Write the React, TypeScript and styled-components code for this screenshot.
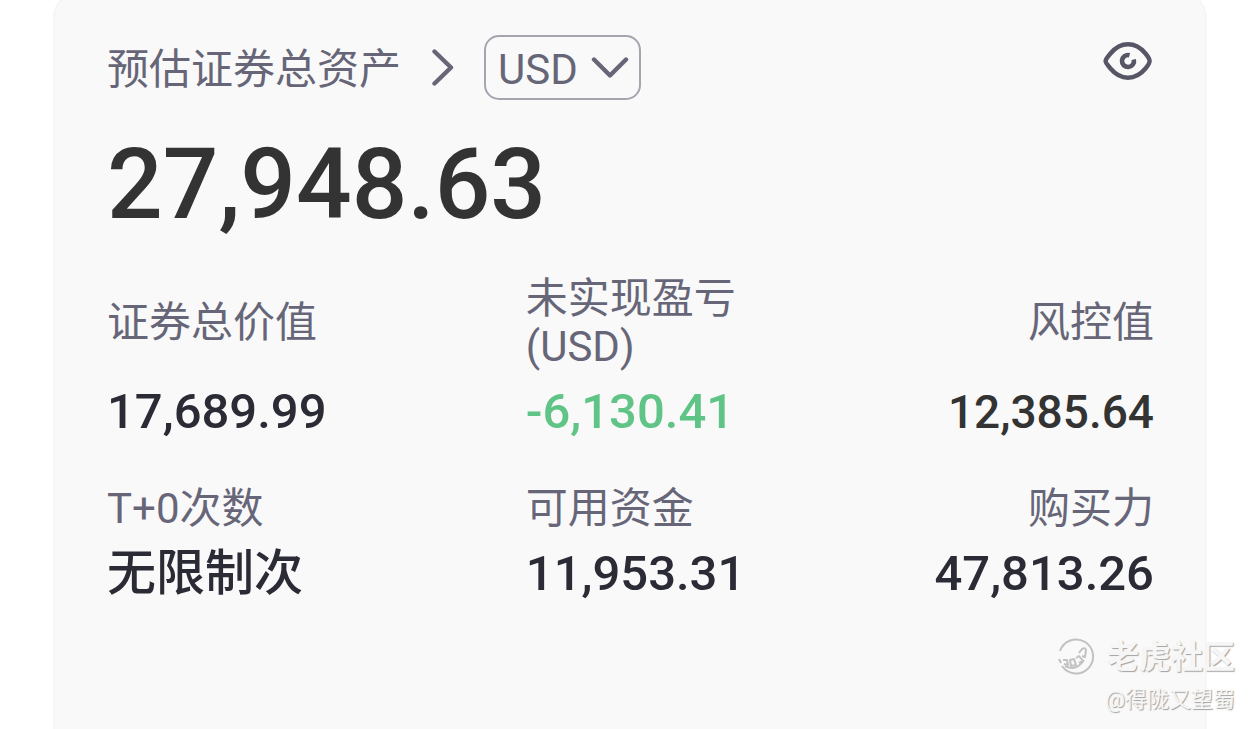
import React from "react";
import styled, { createGlobalStyle } from "styled-components";

const GlobalStyle = createGlobalStyle`
  * { box-sizing: border-box; }
  body {
    margin: 0;
    background: #fff;
    font-family: Roboto, "Noto Sans CJK SC", sans-serif;
  }
`;

const Page = styled.main`
  position: relative;
  min-height: 100vh;
  padding: 0 53px;
  overflow: hidden;
`;

const Card = styled.section`
  min-height: calc(100vh + 10px);
  margin-top: -10px;
  padding: 43px 51px 0 52px;
  border: 2px solid #f6f6f6;
  border-bottom: 0;
  border-radius: 28px 28px 0 0;
  background: #f9f9f9;
`;

const Header = styled.header`
  display: flex;
  align-items: center;
  height: 65px;
`;

const TitleLink = styled.a`
  display: flex;
  align-items: center;
  gap: 31px;
  color: #666678;
  font-size: 42px;
  line-height: 48px;
  text-decoration: none;
`;

const TitleText = styled.span`
  padding-top: 4px;
`;

const CurrencyBox = styled.label`
  position: relative;
  margin-left: 30px;
`;

const CurrencySelect = styled.select`
  display: block;
  width: 157px;
  height: 65px;
  padding: 4px 0 0 12px;
  border: 2px solid #a5a5af;
  border-radius: 15px;
  appearance: none;
  background: transparent;
  color: #666678;
  font: inherit;
  font-size: 42px;
`;

const SelectArrow = styled.svg`
  position: absolute;
  top: 20px;
  right: 12px;
  pointer-events: none;
`;

const EyeButton = styled.button`
  display: flex;
  align-self: flex-start;
  margin-left: auto;
  padding: 6px 1px 0 0;
  border: 0;
  background: none;
  cursor: pointer;
`;

const Total = styled.p`
  margin: 27px 0 32px;
  color: #333;
  font-size: 98px;
  font-weight: 500;
  line-height: 116px;
`;

const Metrics = styled.dl`
  display: grid;
  grid-template-columns: 40% 28% 32%;
  row-gap: 45px;
  margin: 0;
`;

const Metric = styled.div<{ $end?: boolean }>`
  display: flex;
  flex-direction: column;
  text-align: ${(p) => (p.$end ? "right" : "left")};
`;

const MetricLabel = styled.dt`
  display: flex;
  flex: 1;
  flex-direction: column;
  justify-content: center;
  color: #666678;
  font-size: 42px;
  line-height: 48px;
`;

const MetricValue = styled.dd<{ $tone?: string; $small?: boolean }>`
  margin: 13px 0 0;
  color: ${(p) => p.$tone || "#2b2b36"};
  font-size: ${(p) => (p.$small ? 46 : 49)}px;
  font-weight: 500;
  line-height: 56px;
`;

const Watermark = styled.aside`
  position: absolute;
  right: 25px;
  bottom: 12px;
  display: flex;
  flex-direction: column;
  align-items: flex-end;
  color: #f6f6f6;
  text-shadow: 1px 1px 1px #a0a0a0;
`;

const Brand = styled.div`
  display: flex;
  align-items: center;
  gap: 12px;
  font-size: 32px;
  font-weight: 700;
  line-height: 52px;
`;

const Author = styled.div`
  font-size: 22px;
  line-height: 34px;
`;

type Item = { label: string; value: string; end?: boolean; tone?: string; small?: boolean };

const items: Item[] = [
  { label: "证券总价值", value: "17,689.99" },
  { label: "未实现盈亏(USD)", value: "-6,130.41", tone: "#61c487" },
  { label: "风控值", value: "12,385.64", end: true, tone: "#333", small: true },
  { label: "T+0次数", value: "无限制次" },
  { label: "可用资金", value: "11,953.31" },
  { label: "购买力", value: "47,813.26", end: true },
];

export default function App() {
  return (
    <>
      <GlobalStyle />
      <Page>
        <Card>
          <Header>
            <TitleLink href="#assets">
              <TitleText>预估证券总资产</TitleText>
              <svg width="22" height="38" viewBox="0 0 22 38" fill="none" stroke="#666678" strokeWidth="4.4" strokeLinecap="round" strokeLinejoin="round">
                <path d="M2.500 2.500 L19 18.500 L2.500 34.500" />
              </svg>
            </TitleLink>
            <CurrencyBox>
              <CurrencySelect aria-label="币种" defaultValue="USD">
                <option>USD</option>
                <option>HKD</option>
              </CurrencySelect>
              <SelectArrow width="38" height="26" viewBox="0 0 38 26" fill="none" stroke="#666678" strokeWidth="4.4" strokeLinecap="round" strokeLinejoin="round">
                <path d="M3 4.500 L19 20.500 L35 4.500" />
              </SelectArrow>
            </CurrencyBox>
            <EyeButton aria-label="隐藏金额">
              <svg width="50" height="40" viewBox="0 0 50 40" fill="none" stroke="#565666">
                <path d="M2.6 20 C2.6 18 5 15.5 7.5 12.5 C12.5 6.5 18 3.3 25 3.3 C32 3.3 37.5 6.5 42.5 12.5 C45 15.5 46.6 18 46.6 20 C46.6 22 45 24.5 42.5 27.5 C37.5 33.5 32 36.7 25 36.7 C18 36.7 12.5 33.5 7.5 27.5 C5 24.5 2.6 22 2.6 20 Z" strokeWidth="4.4" strokeLinejoin="round" />
                <path d="M26.5 14.2 A6 6 0 1 0 30.8 18.5" strokeWidth="4.6" />
              </svg>
            </EyeButton>
          </Header>
          <Total>27,948.63</Total>
          <Metrics>
            {items.map((m) => (
              <Metric key={m.label} $end={m.end}>
                <MetricLabel>{m.label}</MetricLabel>
                <MetricValue $tone={m.tone} $small={m.small}>{m.value}</MetricValue>
              </Metric>
            ))}
          </Metrics>
        </Card>
        <Watermark>
          <Brand>
            <svg width="38" height="38" viewBox="0 0 38 38" fill="none" stroke="#c2c2c4" strokeWidth="2">
              <path d="M3 13 A17 17 0 1 1 5 28" />
              <path d="M2 21 L4 25" />
              <path d="M6 22 L10 22 L11 27 L7 26 M13 22 L17 21 L19 27 L14 28 Z M19 20 L22 18 L26 23 L22 25 M22 15 L25 11 Q28 9 29 12 L28 19 L25 18" strokeLinejoin="round" />
              <path d="M8 28 Q19 34 27 22" />
            </svg>
            老虎社区
          </Brand>
          <Author>@得陇又望蜀</Author>
        </Watermark>
      </Page>
    </>
  );
}
